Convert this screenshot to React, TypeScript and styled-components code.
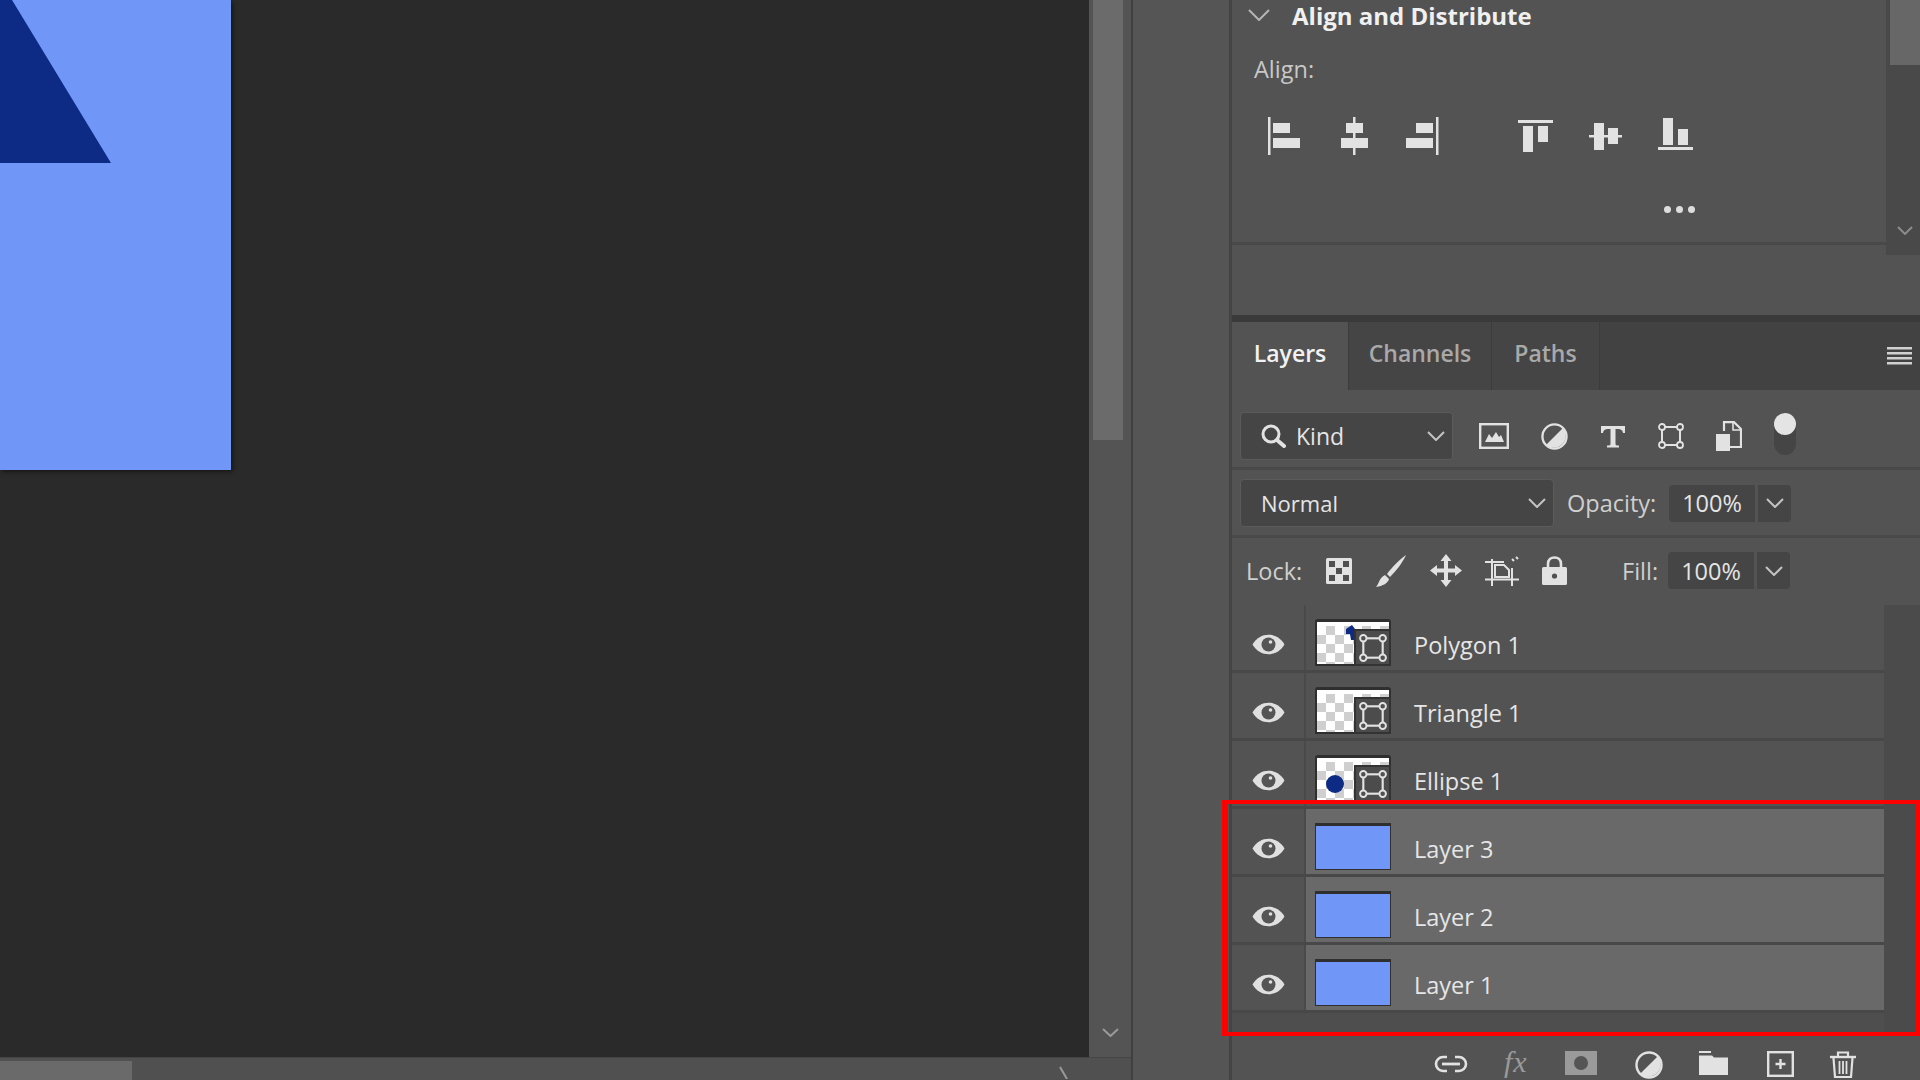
import React from 'react';
import styled, { createGlobalStyle } from 'styled-components';

const GlobalStyle = createGlobalStyle`
  html, body {
    margin: 0;
    padding: 0;
    background: #535353;
  }
  * {
    box-sizing: border-box;
  }
`;

const ICON = '#e2e2e2';

const Page = styled.div`
  position: relative;
  display: flex;
  width: 1920px;
  height: 1080px;
  overflow: hidden;
  font-family: 'Open Sans', 'Liberation Sans', sans-serif;
  color: #e4e4e4;
`;

const Workspace = styled.div`
  display: flex;
  flex-direction: column;
  width: 1131px;
  flex-shrink: 0;
`;

const WorkspaceTop = styled.div`
  display: flex;
  height: 1057px;
`;

const Canvas = styled.div`
  position: relative;
  width: 1089px;
  background: #2a2a2a;
  overflow: hidden;
`;

const Artboard = styled.div`
  position: absolute;
  left: 0;
  top: 0;
  width: 231px;
  height: 470px;
  background: #7097f8;
  box-shadow: 2px 2px 4px rgba(0, 0, 0, 0.45);
`;

const Triangle = styled.svg`
  position: absolute;
  left: 0;
  top: 0;
`;

const VScroll = styled.div`
  display: flex;
  flex-direction: column;
  justify-content: space-between;
  align-items: center;
  width: 42px;
  padding: 0 8px 20px 4px;
  background: #545454;
`;

const VThumb = styled.div`
  width: 30px;
  height: 440px;
  background: #6b6b6b;
`;

const VArrow = styled.div`
  display: flex;
  margin-left: 4px;
`;

const HScroll = styled.div`
  display: flex;
  justify-content: space-between;
  height: 23px;
  padding: 3px 62px 0 0;
  background: #505050;
  border-top: 1px solid #444;
`;

const HThumb = styled.div`
  width: 132px;
  background: #6a6a6a;
`;

const Dock = styled.div`
  width: 101px;
  flex-shrink: 0;
  background: #555;
  border-left: 2px solid #404040;
  border-right: 3px solid #444;
`;

const Panel = styled.div`
  display: flex;
  flex-direction: column;
  flex: 1;
  background: #535353;
`;

const AlignSection = styled.section`
  display: flex;
  height: 255px;
  flex-shrink: 0;
`;

const AlignBody = styled.div`
  flex: 1;
  height: 245px;
  border-bottom: 3px solid #494949;
`;

const AlignHeader = styled.div`
  display: flex;
  align-items: center;
  height: 30px;
  padding-left: 16px;
  gap: 22px;
`;

const AlignTitle = styled.h2`
  margin: 0;
  font-size: 24px;
  font-weight: 700;
  color: #f0f0f0;
`;

const AlignLabel = styled.div`
  margin: 23px 0 0 22px;
  height: 32px;
  line-height: 32px;
  font-size: 23.5px;
  color: #c8c8c8;
`;

const AlignIcons = styled.div`
  display: flex;
  height: 40px;
  margin: 31px 0 0 35px;
`;

const AlignGroup = styled.div<{ $gap: number; $offset: number }>`
  display: flex;
  gap: ${(p) => p.$gap}px;
  margin-left: ${(p) => p.$offset}px;
`;

const MoreDots = styled.div`
  display: flex;
  gap: 5px;
  margin: 50px 0 0 432px;
`;

const Dot = styled.span`
  width: 7px;
  height: 7px;
  border-radius: 50%;
  background: #ddd;
`;

const SideScroll = styled.div`
  display: flex;
  flex-direction: column;
  justify-content: space-between;
  align-items: center;
  width: 34px;
  padding: 0 0 20px 4px;
  background: #494949;
`;

const SideThumb = styled.div`
  width: 100%;
  height: 65px;
  background: #676767;
`;

const Spacer = styled.div`
  height: 60px;
  flex-shrink: 0;
`;

const TabBar = styled.div`
  display: flex;
  align-items: stretch;
  height: 75px;
  flex-shrink: 0;
  background: #424242;
  border-top: 7px solid #3a3a3a;
`;

const Tab = styled.div<{ $active?: boolean; $width: number }>`
  display: flex;
  align-items: center;
  justify-content: center;
  width: ${(p) => p.$width}px;
  padding-bottom: 7px;
  font-size: 23px;
  font-weight: 600;
  color: ${(p) => (p.$active ? '#f2f2f2' : '#a9a9a9')};
  background: ${(p) => (p.$active ? '#535353' : '#454545')};
  border-right: 1px solid #3c3c3c;
`;

const TabMenu = styled.div`
  display: flex;
  align-items: center;
  margin-left: auto;
  padding-right: 8px;
`;

const Toolbar = styled.div<{ $height: number; $top?: number; $bottom?: number; $divider?: boolean }>`
  display: flex;
  align-items: center;
  height: ${(p) => p.$height}px;
  flex-shrink: 0;
  padding: ${(p) => p.$top ?? 0}px 0 ${(p) => p.$bottom ?? 0}px 8px;
  border-bottom: ${(p) => (p.$divider ? '3px solid #494949' : 'none')};
`;

const Dropdown = styled.div<{ $width: number; $size: number }>`
  display: flex;
  align-items: center;
  width: ${(p) => p.$width}px;
  height: 48px;
  padding: 0 7px 0 20px;
  gap: 10px;
  font-size: ${(p) => p.$size}px;
  background: #454545;
  border: 1px solid #5b5b5b;
  border-radius: 4px;
`;

const DropdownText = styled.span`
  flex: 1;
`;

const FilterIcons = styled.div`
  display: flex;
  align-items: center;
  gap: 32px;
  margin-left: 26px;
`;

const Toggle = styled.div`
  position: relative;
  width: 22px;
  height: 42px;
  margin-top: -4px;
  border-radius: 11px;
  background: #454545;
`;

const ToggleKnob = styled.span`
  position: absolute;
  left: 0;
  top: 0;
  width: 22px;
  height: 22px;
  border-radius: 50%;
  background: #e4e4e4;
`;

const FieldLabel = styled.span<{ $width: number; $left: number }>`
  width: ${(p) => p.$width}px;
  margin-left: ${(p) => p.$left}px;
  text-align: right;
  font-size: 23.5px;
  color: #cfcfcf;
  white-space: nowrap;
`;

const NumberBox = styled.div`
  display: flex;
  align-items: center;
  justify-content: center;
  width: 86px;
  height: 37px;
  margin-left: 13px;
  font-size: 23.5px;
  background: #454545;
  border-radius: 4px 0 0 4px;
`;

const NumberButton = styled.div`
  display: flex;
  align-items: center;
  justify-content: center;
  width: 33px;
  height: 37px;
  margin-left: 3px;
  background: #454545;
  border-radius: 0 4px 4px 0;
`;

const LockIcons = styled.div`
  display: flex;
  align-items: center;
  gap: 23px;
  margin-left: 24px;
`;

const LayerArea = styled.div`
  display: flex;
  height: 431px;
  flex-shrink: 0;
`;

const LayerList = styled.div`
  flex: 1;
  background: #4e4e4e;
`;

const LayerStrip = styled.div`
  width: 36px;
  background: #4b4b4b;
`;

const LayerRow = styled.div`
  display: flex;
  height: 68px;
  border-bottom: 3px solid #484848;
`;

const EyeCell = styled.div`
  display: flex;
  justify-content: center;
  width: 74px;
  padding: 28px 0 0;
  background: #535353;
  border-right: 2px solid #4a4a4a;
`;

const LayerBody = styled.div<{ $selected?: boolean }>`
  display: flex;
  align-items: flex-start;
  flex: 1;
  padding: 14px 0 0 9px;
  background: ${(p) => (p.$selected ? '#696969' : '#535353')};
`;

const Thumb = styled.div`
  position: relative;
  width: 76px;
  height: 47px;
  flex-shrink: 0;
  border: solid #2f2f2f;
  border-width: 3px 2px 2px 2px;
  border-radius: 3px 3px 0 0;
  background:
    linear-gradient(#fff, #fff) top / 100% 4px no-repeat,
    repeating-conic-gradient(#cfcfcf 0 25%, #fff 0 50%) 0 4px / 18px 18px;
`;

const ShapeBadge = styled.div`
  position: absolute;
  right: -2px;
  bottom: -2px;
  display: flex;
  align-items: center;
  justify-content: center;
  width: 37px;
  height: 37px;
  background: #4c4c4c;
  border: 2px solid #333;
`;

const ThumbMark = styled.svg`
  position: absolute;
  left: 0;
  top: 0;
`;

const FillThumb = styled.div`
  width: 76px;
  height: 47px;
  flex-shrink: 0;
  background: #7097f8;
  border: 1px solid #2f2f2f;
  border-top-width: 3px;
`;

const LayerName = styled.span`
  margin: 10px 0 0 23px;
  font-size: 23.5px;
  color: #e6e6e6;
`;

const Footer = styled.div`
  display: flex;
  align-items: flex-start;
  flex: 1;
  padding: 15px 0 0 202px;
  gap: 36px;
`;

const FxLabel = styled.span`
  width: 25px;
  margin-top: -3px;
  font-family: 'Liberation Serif', serif;
  font-style: italic;
  font-size: 30px;
  line-height: 28px;
  letter-spacing: 1px;
  color: #9a9a9a;
`;

const Highlight = styled.div`
  position: absolute;
  left: 1222px;
  top: 800px;
  width: 698px;
  height: 236px;
  border: solid #f00;
  border-width: 4px 4px 4px 6px;
  pointer-events: none;
`;

const Chevron: React.FC<{ w?: number; h?: number; color?: string }> = ({
  w = 18,
  h = 10,
  color = '#c4c4c4',
}) => (
  <svg width={w} height={h} viewBox={`0 0 ${w} ${h}`} style={{ flexShrink: 0 }}>
    <polyline points={`1,1 ${w / 2},${h - 1} ${w - 1},1`} fill="none" stroke={color} strokeWidth="2" />
  </svg>
);

const AlignH: React.FC<{ kind: 'left' | 'center' | 'right' }> = ({ kind }) => {
  const bar = kind === 'left' ? 1 : kind === 'center' ? 17 : 31;
  const short = kind === 'left' ? 6 : kind === 'center' ? 10 : 11;
  const long = kind === 'left' ? 6 : kind === 'center' ? 5 : 1;
  return (
    <svg width="36" height="40" viewBox="0 0 36 40">
      <rect x={bar} y="1" width="2.5" height="38" fill={ICON} />
      <rect x={short} y="7" width="17" height="10" fill={ICON} />
      <rect x={long} y="22" width="27" height="10" fill={ICON} />
    </svg>
  );
};

const AlignTop = () => (
  <svg width="36" height="40" viewBox="0 0 36 40">
    <rect x="0" y="4" width="35" height="3" fill={ICON} />
    <rect x="5" y="10" width="10" height="26" fill={ICON} />
    <rect x="20" y="10" width="10" height="16" fill={ICON} />
  </svg>
);

const AlignMiddle = () => (
  <svg width="36" height="40" viewBox="0 0 36 40">
    <rect x="1" y="19" width="33" height="2.5" fill={ICON} />
    <rect x="6" y="7" width="10" height="27" fill={ICON} />
    <rect x="20" y="12" width="10" height="16" fill={ICON} />
  </svg>
);

const AlignBottom = () => (
  <svg width="36" height="40" viewBox="0 0 36 40">
    <rect x="0" y="31" width="35" height="3" fill={ICON} />
    <rect x="5" y="2" width="10" height="27" fill={ICON} />
    <rect x="20" y="13" width="10" height="16" fill={ICON} />
  </svg>
);

const MenuIcon = () => (
  <svg width="25" height="18" viewBox="0 0 25 18">
    <rect y="0" width="25" height="2.5" fill="#d0d0d0" />
    <rect y="5" width="25" height="2.5" fill="#d0d0d0" />
    <rect y="10" width="25" height="2.5" fill="#d0d0d0" />
    <rect y="15" width="25" height="2.5" fill="#d0d0d0" />
  </svg>
);

const SearchIcon = () => (
  <svg width="25" height="24" viewBox="0 0 25 24" style={{ flexShrink: 0 }}>
    <circle cx="10" cy="10" r="8" fill="none" stroke={ICON} strokeWidth="3" />
    <line x1="16" y1="16" x2="23" y2="22" stroke={ICON} strokeWidth="4" strokeLinecap="round" />
  </svg>
);

const ImageIcon = () => (
  <svg width="30" height="26" viewBox="0 0 30 26">
    <rect x="1.2" y="1.2" width="27.6" height="23.6" fill="none" stroke={ICON} strokeWidth="2.4" />
    <path d="M6 19 L10 11 L13 15 L17 9 L20 14 L22 12 L25 19 Z" fill={ICON} />
  </svg>
);

const AdjustIcon: React.FC<{ size?: number }> = ({ size = 27 }) => (
  <svg width={size} height={size} viewBox="0 0 28 28">
    <circle cx="14" cy="14" r="12.5" fill="none" stroke={ICON} strokeWidth="2.4" />
    <path d="M22.8 5.2 A12.5 12.5 0 0 1 5.2 22.8 Z" fill={ICON} />
  </svg>
);

const TypeIcon = () => (
  <svg width="26" height="23" viewBox="0 0 26 23">
    <path
      d="M1 1 H25 V8 H23 C22.5 5 21 4 18 4 H15.5 V19 C15.5 20 16.5 20.5 19 20.5 V22.5 H7 V20.5 C9.5 20.5 10.5 20 10.5 19 V4 H8 C5 4 3.5 5 3 8 H1 Z"
      fill={ICON}
    />
  </svg>
);

const ShapeIcon: React.FC<{ size?: number }> = ({ size = 26 }) => (
  <svg width={size} height={size} viewBox="0 0 26 26">
    <rect x="4" y="4" width="18" height="18" fill="none" stroke={ICON} strokeWidth="2" />
    {[4, 22].map((x) =>
      [4, 22].map((y) => (
        <circle key={`${x}-${y}`} cx={x} cy={y} r="3" fill="#505050" stroke={ICON} strokeWidth="1.8" />
      ))
    )}
  </svg>
);

const SmartIcon = () => (
  <svg width="26" height="30" viewBox="0 0 26 30">
    <path d="M8 10 V1.2 H18 L25 8 V26 H14" fill="none" stroke={ICON} strokeWidth="2.2" />
    <path d="M17 1.5 V9 H25" fill="none" stroke={ICON} strokeWidth="1.6" />
    <rect x="0" y="13" width="14" height="17" fill={ICON} />
  </svg>
);

const CheckerIcon = () => (
  <svg width="26" height="26" viewBox="0 0 26 26">
    <rect width="26" height="26" rx="1.5" fill={ICON} />
    <rect x="3" y="3" width="6" height="6" fill="#505050" />
    <rect x="17" y="3" width="6" height="6" fill="#505050" />
    <rect x="10" y="10" width="6" height="6" fill="#505050" />
    <rect x="3" y="17" width="6" height="6" fill="#505050" />
    <rect x="17" y="17" width="6" height="6" fill="#505050" />
  </svg>
);

const BrushIcon = () => (
  <svg width="32" height="33" viewBox="0 0 32 33">
    <path d="M31 1 C25 5 17 13 12 20 L15 23 C21 17 28 8 31 1 Z" fill={ICON} />
    <path d="M10 21 L14 25 C13 29 8 32 1 33 C4 30 4 24 10 21 Z" fill={ICON} />
  </svg>
);

const MoveIcon = () => (
  <svg width="32" height="33" viewBox="0 0 32 33">
    <path
      d="M16 0 L21.5 7 H18 V14.5 H25 V11 L32 16.5 L25 22 V18.5 H18 V26 H21.5 L16 33 L10.5 26 H14 V18.5 H7 V22 L0 16.5 L7 11 V14.5 H14 V7 H10.5 Z"
      fill={ICON}
    />
  </svg>
);

const CropIcon = () => (
  <svg width="34" height="30" viewBox="0 0 34 30">
    <path d="M7 3 V30 M0 23.5 H34 M27 12 V30 M0 6 H19" fill="none" stroke={ICON} strokeWidth="2" />
    <path d="M10 9 H19 L24 14 V21 H10 Z" fill="none" stroke={ICON} strokeWidth="2" />
    <path d="M27 3 L29 5 M31 1 L33 3" stroke={ICON} strokeWidth="2" />
  </svg>
);

const LockIcon = () => (
  <svg width="25" height="29" viewBox="0 0 25 29">
    <path d="M6 12 V8 C6 3.5 9 1.5 12.5 1.5 C16 1.5 19 3.5 19 8 V12" fill="none" stroke={ICON} strokeWidth="2.6" />
    <rect y="11" width="25" height="18" rx="1.5" fill={ICON} />
    <circle cx="12.5" cy="20" r="2.6" fill="#505050" />
  </svg>
);

const EyeIcon = () => (
  <svg width="33" height="23" viewBox="0 0 33 23">
    <path d="M0.5 11.5 C8 -1.5 25 -1.5 32.5 11.5 C25 24.5 8 24.5 0.5 11.5 Z" fill="#e0e0e0" />
    <circle cx="16.5" cy="11.5" r="7" fill="#555" />
    <circle cx="18.5" cy="9" r="1.8" fill="#e0e0e0" />
  </svg>
);

const LinkIcon = () => (
  <svg width="34" height="24" viewBox="0 -4 34 24">
    <path d="M13 2 H9 A7 7 0 0 0 9 16 H13" fill="none" stroke={ICON} strokeWidth="2.6" />
    <path d="M21 2 H25 A7 7 0 0 1 25 16 H21" fill="none" stroke={ICON} strokeWidth="2.6" />
    <rect x="8" y="7.6" width="18" height="2.8" fill={ICON} />
  </svg>
);

const MaskIcon = () => (
  <svg width="34" height="24" viewBox="0 0 34 24">
    <rect width="32" height="24" fill="#9a9a9a" />
    <circle cx="16" cy="12" r="7" fill="#555" />
  </svg>
);

const FolderIcon = () => (
  <svg width="32" height="24" viewBox="0 0 32 24">
    <rect x="0" y="0" width="12" height="2" fill={ICON} />
    <path d="M0 4.5 H13 L15 6.5 H29 V24 H0 Z" fill={ICON} />
  </svg>
);

const NewLayerIcon = () => (
  <svg width="27" height="26" viewBox="0 0 27 26">
    <rect x="1.2" y="1.2" width="24.6" height="23.6" fill="none" stroke={ICON} strokeWidth="2.4" />
    <path d="M13.5 8 V18 M8.5 13 H18.5" stroke={ICON} strokeWidth="2.4" />
  </svg>
);

const TrashIcon = () => (
  <svg width="26" height="27" viewBox="0 0 26 27">
    <path d="M0 6 H26" stroke={ICON} strokeWidth="2.4" />
    <path d="M8 5 V1.5 H18 V5" fill="none" stroke={ICON} strokeWidth="2.2" />
    <path d="M3.5 7 L5 26 H21 L22.5 7" fill="none" stroke={ICON} strokeWidth="2.2" />
    <path d="M9.5 10 V23 M13 10 V23 M16.5 10 V23" stroke={ICON} strokeWidth="1.8" />
  </svg>
);

type ShapeMark = 'polygon' | 'none' | 'ellipse';

const shapeLayers: { name: string; mark: ShapeMark }[] = [
  { name: 'Polygon 1', mark: 'polygon' },
  { name: 'Triangle 1', mark: 'none' },
  { name: 'Ellipse 1', mark: 'ellipse' },
];

const fillLayers = ['Layer 3', 'Layer 2', 'Layer 1'];

const App: React.FC = () => {
  return (
    <Page>
      <GlobalStyle />
      <Workspace>
        <WorkspaceTop>
          <Canvas>
            <Artboard />
            <Triangle width="112" height="163" viewBox="0 0 112 163">
              <polygon points="0,0 12,0 111,163 0,163" fill="#0d2b85" />
            </Triangle>
          </Canvas>
          <VScroll>
            <VThumb />
            <VArrow>
              <Chevron w={17} h={9} color="#9a9a9a" />
            </VArrow>
          </VScroll>
        </WorkspaceTop>
        <HScroll>
          <HThumb />
          <svg width="10" height="18" viewBox="0 0 10 18">
            <polyline points="1,6 8,18" fill="none" stroke="#9a9a9a" strokeWidth="2" />
          </svg>
        </HScroll>
      </Workspace>
      <Dock />
      <Panel>
        <AlignSection>
          <AlignBody>
            <AlignHeader>
              <Chevron w={22} h={12} color="#b4b4b4" />
              <AlignTitle>Align and Distribute</AlignTitle>
            </AlignHeader>
            <AlignLabel>Align:</AlignLabel>
            <AlignIcons>
              <AlignGroup $gap={33} $offset={0}>
                <AlignH kind="left" />
                <AlignH kind="center" />
                <AlignH kind="right" />
              </AlignGroup>
              <AlignGroup $gap={34} $offset={77}>
                <AlignTop />
                <AlignMiddle />
                <AlignBottom />
              </AlignGroup>
            </AlignIcons>
            <MoreDots>
              <Dot />
              <Dot />
              <Dot />
            </MoreDots>
          </AlignBody>
          <SideScroll>
            <SideThumb />
            <Chevron w={16} h={9} color="#8c8c8c" />
          </SideScroll>
        </AlignSection>
        <Spacer />
        <TabBar>
          <Tab $active $width={117}>Layers</Tab>
          <Tab $width={143}>Channels</Tab>
          <Tab $width={108}>Paths</Tab>
          <TabMenu>
            <MenuIcon />
          </TabMenu>
        </TabBar>
        <Toolbar $height={80} $top={15} $divider>
          <Dropdown $width={213} $size={23}>
            <SearchIcon />
            <DropdownText>Kind</DropdownText>
            <Chevron />
          </Dropdown>
          <FilterIcons>
            <ImageIcon />
            <AdjustIcon />
            <TypeIcon />
            <ShapeIcon />
            <SmartIcon />
            <Toggle>
              <ToggleKnob />
            </Toggle>
          </FilterIcons>
        </Toolbar>
        <Toolbar $height={68} $top={1} $divider>
          <Dropdown $width={314} $size={22}>
            <DropdownText>Normal</DropdownText>
            <Chevron />
          </Dropdown>
          <FieldLabel $width={89} $left={13}>Opacity:</FieldLabel>
          <NumberBox>100%</NumberBox>
          <NumberButton>
            <Chevron />
          </NumberButton>
        </Toolbar>
        <Toolbar $height={67} $bottom={2}>
          <FieldLabel $width={56} $left={6}>Lock:</FieldLabel>
          <LockIcons>
            <CheckerIcon />
            <BrushIcon />
            <MoveIcon />
            <CropIcon />
            <LockIcon />
          </LockIcons>
          <FieldLabel $width={33} $left={55}>Fill:</FieldLabel>
          <NumberBox>100%</NumberBox>
          <NumberButton>
            <Chevron />
          </NumberButton>
        </Toolbar>
        <LayerArea>
          <LayerList>
            {shapeLayers.map((layer) => (
              <LayerRow key={layer.name}>
                <EyeCell>
                  <EyeIcon />
                </EyeCell>
                <LayerBody>
                  <Thumb>
                    {layer.mark === 'polygon' && (
                      <ThumbMark width="45" height="22" viewBox="0 0 45 22">
                        <path d="M29 7 L35 3 L38 7 L38 18 L34 18 L33 12 L29 12 Z" fill="#0d2b85" />
                      </ThumbMark>
                    )}
                    {layer.mark === 'ellipse' && (
                      <ThumbMark width="40" height="42" viewBox="0 0 40 42">
                        <circle cx="18" cy="26" r="9" fill="#0d2b85" />
                      </ThumbMark>
                    )}
                    <ShapeBadge>
                      <ShapeIcon size={28} />
                    </ShapeBadge>
                  </Thumb>
                  <LayerName>{layer.name}</LayerName>
                </LayerBody>
              </LayerRow>
            ))}
            {fillLayers.map((name) => (
              <LayerRow key={name}>
                <EyeCell>
                  <EyeIcon />
                </EyeCell>
                <LayerBody $selected>
                  <FillThumb />
                  <LayerName>{name}</LayerName>
                </LayerBody>
              </LayerRow>
            ))}
          </LayerList>
          <LayerStrip />
        </LayerArea>
        <Footer>
          <LinkIcon />
          <FxLabel>fx</FxLabel>
          <MaskIcon />
          <AdjustIcon size={28} />
          <FolderIcon />
          <NewLayerIcon />
          <TrashIcon />
        </Footer>
      </Panel>
      <Highlight />
    </Page>
  );
};

export default App;
